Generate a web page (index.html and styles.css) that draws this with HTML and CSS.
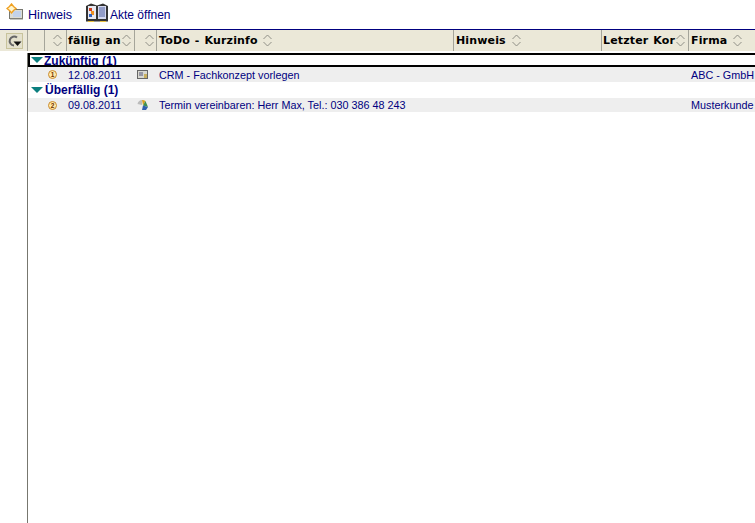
FILE: index.html
```html
<!DOCTYPE html>
<html lang="de">
<head>
<meta charset="utf-8">
<title>ToDo</title>
<link rel="stylesheet" href="styles.css">
</head>
<body>
<svg class="defs" width="0" height="0" aria-hidden="true">
  <symbol id="sort" viewBox="0 0 9 13">
    <path d="M.5 5 4.500 1 8.500 5M.5 8 4.500 12 8.500 8" fill="none" stroke="#8f8f86" stroke-width="1"/>
  </symbol>
</svg>
<div class="toolbar">
  <div class="tool tool-note">
    <svg class="icon-note" width="22" height="20" viewBox="0 0 22 20">
      <rect x="3.500" y="6.500" width="13" height="9" fill="#dcdcd4" stroke="#77776f"/>
      <path d="M4 15.500h13v1H4Z" fill="#8a8a82"/>
      <rect x="7" y="8" width="8" height="6" fill="#c3d2ea"/>
      <path d="M5.500 1 7.500 3.500 10 5.500 7.500 7.500 5.500 10 3.500 7.500 1 5.500 3.500 3.500Z" fill="#fff6cf" stroke="#f0a020" stroke-width="1.400"/>
    </svg>
    <span class="label-note">Hinweis</span>
  </div>
  <div class="tool tool-file">
    <svg width="24" height="20" viewBox="0 0 24 20">
      <path d="M1 3 6 .500 12 2.500 18 .500 23 3V18.500H1Z" fill="#333"/>
      <rect x="3" y="3" width="8" height="13" fill="#e8e8f0"/>
      <rect x="13" y="3" width="8" height="13" fill="#d5d9ef"/>
      <path d="M4 5h3v3H4Z" fill="#d04020"/>
      <path d="M6 8h3v4H6Z" fill="#f09020"/>
      <path d="M4 11h3v3H4Z" fill="#3060c0"/>
      <path d="M14 5h6M14 7h6M14 9h6M14 11h6M14 13h6" stroke="#5060a0"/>
      <path d="M3 18.500h6M15 18.500h6" stroke="#e8c040"/>
    </svg>
    <span>Akte öffnen</span>
  </div>
</div>
<div class="table-head">
  <div class="refresh-cell">
    <div class="refresh">
      <svg width="15" height="14" viewBox="0 0 15 14">
        <path d="M10 3.500A4.500 4.500 0 1 0 7 11.500" fill="none" stroke="#666" stroke-width="2"/>
        <path d="M6.500 7.500h8L10.500 12Z" fill="#111"/>
      </svg>
    </div>
  </div>
  <div class="col col-a"></div>
  <div class="col col-b"><svg class="sort"><use href="#sort"/></svg></div>
  <div class="col col-c"><b>fällig an</b><svg class="sort"><use href="#sort"/></svg></div>
  <div class="col col-d"><svg class="sort"><use href="#sort"/></svg></div>
  <div class="col col-e"><b>ToDo - Kurzinfo</b><svg class="sort"><use href="#sort"/></svg></div>
  <div class="col col-f"><b>Hinweis</b><svg class="sort"><use href="#sort"/></svg></div>
  <div class="col col-g"><b>Letzter Kor</b><svg class="sort"><use href="#sort"/></svg></div>
  <div class="col col-h"><b>Firma</b><svg class="sort"><use href="#sort"/></svg></div>
</div>
<div class="body">
  <div class="gutter"></div>
  <div class="content">
    <div class="group group-focus"><i class="tri"></i><span>Zukünftig (1)</span></div>
    <div class="row row-first">
      <span class="badge">1</span>
      <span class="date">12.08.2011</span>
      <span class="type">
        <svg width="12" height="10" viewBox="0 0 12 10"><rect x=".5" y=".5" width="10" height="8" fill="#d8d8d0" stroke="#666"/><path d="M2 3h4M2 5h4" stroke="#557"/><rect x="7" y="4" width="3" height="4" fill="#c9b060"/></svg>
      </span>
      <span class="todo">CRM - Fachkonzept vorlegen</span>
      <span class="firm">ABC - GmbH</span>
    </div>
    <div class="group"><i class="tri"></i><span>Überfällig (1)</span></div>
    <div class="row">
      <span class="badge">2</span>
      <span class="date">09.08.2011</span>
      <span class="type">
        <svg width="12" height="12" viewBox="0 0 12 12"><path d="M.5 5A5 5 0 0 1 5 1V6Z" fill="#bbb"/><path d="M5 1A5 5 0 0 1 8.500 2L6 6.500Z" fill="#d8a020"/><path d="M8.500 2 11 8 6 6.500Z" fill="#3f8f50"/><path d="M6 6.500 11 8 9 11H5Z" fill="#3060b0"/></svg>
      </span>
      <span class="todo">Termin vereinbaren: Herr Max, Tel.: 030 386 48 243</span>
      <span class="firm firm-2">Musterkunde</span>
    </div>
  </div>
</div>
</body>
</html>
```
FILE: styles.css
```css
* { box-sizing: border-box; }
html, body { margin: 0; height: 100%; }
body {
  width: 755px;
  height: 523px;
  overflow: hidden;
  background: #fff;
  color: #000080;
  font: 11px "Liberation Sans", Arial, sans-serif;
  display: flex;
  flex-direction: column;
}
.defs { position: absolute; }
.toolbar {
  height: 29px;
  flex: none;
  display: flex;
  align-items: flex-start;
  padding: 3px 0 0 6px;
}
.tool { display: flex; align-items: center; height: 20px; }
.tool span { font-size: 12px; padding-top: 4px; }
.tool .label-note { font-size: 12.600px; }
.tool-note { width: 79px; }
.tool-file svg { margin-right: 1px; }
.table-head {
  height: 24px;
  flex: none;
  display: flex;
  border-top: 1px solid #000080;
  background: #ebe8d8;
  color: #000;
  position: relative;
}
.table-head::after {
  content: "";
  position: absolute;
  left: 0; right: 0; bottom: 0;
  height: 2px;
  background: #fff;
}
.refresh-cell {
  width: 28px;
  flex: none;
  height: 22px;
  border-right: 1px solid #a5a59a;
  border-bottom: 1px solid #a5a59a;
  padding: 3px 0 0 6px;
}
.refresh {
  width: 17px;
  height: 16px;
  background: #e4e1cd;
  border: 1px solid #c8c39c;
  display: flex;
  align-items: center;
  justify-content: center;
}
.col {
  height: 22px;
  flex: none;
  display: flex;
  align-items: center;
  justify-content: space-between;
  padding: 0 3px 0 1px;
  border-right: 1px solid #a5a59a;
  border-bottom: 1px solid #a5a59a;
}
.col b {
  font: bold 11px "DejaVu Sans", Verdana, sans-serif;
  letter-spacing: .15px;
  word-spacing: 1px;
  white-space: nowrap;
}
.sort { width: 9px; height: 13px; flex: none; }
.col-a { width: 17px; }
.col-b { width: 22px; justify-content: flex-end; padding-right: 4px; }
.col-c { width: 68px; padding-right: 3px; }
.col-d { width: 22px; justify-content: flex-end; padding-right: 2px; }
.col-e { width: 297px; justify-content: flex-start; gap: 5px; padding-left: 2px; }
.col-f { width: 148px; justify-content: flex-start; gap: 6px; padding-left: 2px; }
.col-g { width: 87px; padding-right: 3px; padding-left: 1px; }
.col-h { flex: 1; justify-content: flex-start; gap: 6px; padding-left: 2px; border-right: 0; }
.body { flex: 1; display: flex; min-height: 0; }
.gutter { width: 28px; flex: none; border-right: 1px solid #77776f; }
.content { flex: 1; min-width: 0; }
.group {
  height: 16px;
  display: flex;
  align-items: center;
  font: bold 12px "Liberation Sans", Arial, sans-serif;
  overflow: hidden;
  padding-left: 3px;
}
.group span { margin-left: 2px; }
.group-focus {
  height: 14px;
  border: 2px solid #000;
  border-right: 0;
  padding-left: 1px;
  align-items: flex-start;
}
.group-focus span { line-height: 15px; margin-top: -1px; margin-left: 1px; }
.tri {
  width: 0;
  height: 0;
  flex: none;
  border-left: 6px solid transparent;
  border-right: 6px solid transparent;
  border-top: 6px solid #0b7f7f;
}
.group-focus .tri { margin-top: 2px; }
.row {
  height: 14px;
  display: flex;
  align-items: center;
  background: #eeeeee;
  white-space: nowrap;
}
.row-first { height: 15px; }
.badge {
  width: 9px;
  height: 9px;
  margin-left: 20px;
  flex: none;
  border-radius: 50%;
  background: #ffe9a8;
  border: 1px solid #c98a30;
  font: bold 6.500px/7px "Liberation Sans", sans-serif;
  color: #703000;
  text-align: center;
}
.date { width: 69px; margin-left: 11px; flex: none; font-size: 10.800px; }
.type { width: 22px; flex: none; display: flex; }
.todo { width: 532px; flex: none; font-size: 10.800px; overflow: hidden; }
.firm { font-size: 10.800px; }
```
